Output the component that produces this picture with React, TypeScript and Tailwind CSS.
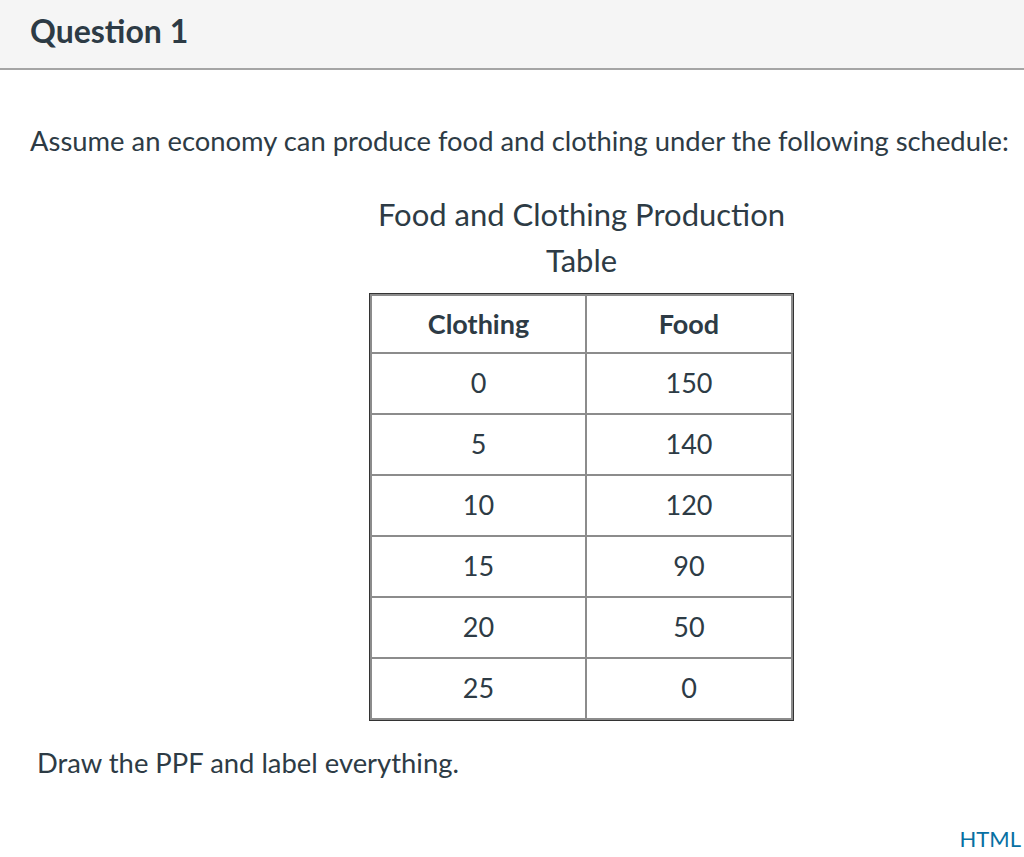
import React from "react";

const rows: [string, string][] = [
  ["0", "150"],
  ["5", "140"],
  ["10", "120"],
  ["15", "90"],
  ["20", "50"],
  ["25", "0"],
];

export default function App() {
  return (
    <div className="w-[1024px] h-[857px] bg-white text-[#2d3b45] flex flex-col" style={{ fontFamily: "Lato, 'Noto Sans', sans-serif" }}>
      <div className="h-[70px] bg-[#f5f5f5] border-b-2 border-[#a5a5a5] flex items-center pl-[30px] shrink-0">
        <h2 className="text-[32px] font-bold leading-none -mt-[6px]">Question 1</h2>
      </div>
      <div className="flex flex-col flex-1 px-[30px]">
        <p className="text-[27.4px] leading-[30px] mt-[56px] whitespace-nowrap">
          Assume an economy can produce food and clothing under the following schedule:
        </p>
        <div className="flex flex-col items-center mt-[35px] ml-[339px] w-[425px]">
          <div className="text-[31px] leading-[46px] text-center whitespace-nowrap">
            Food and Clothing Production<br />Table
          </div>
          <div className="border border-[#333] mt-[10px] w-[425px]">
            <table className="border-collapse w-full text-[27px]">
              <thead>
                <tr className="h-[58px]">
                  <th className="border-2 border-[#8c8c8c] font-bold w-[215px] text-center">Clothing</th>
                  <th className="border-2 border-[#8c8c8c] font-bold text-center">Food</th>
                </tr>
              </thead>
              <tbody>
                {rows.map(([c, f]) => (
                  <tr key={c} className="h-[61px]">
                    <td className="border-2 border-[#8c8c8c] text-center">{c}</td>
                    <td className="border-2 border-[#8c8c8c] text-center">{f}</td>
                  </tr>
                ))}
              </tbody>
            </table>
          </div>
        </div>
        <p className="text-[27.4px] leading-[30px] mt-[27px] ml-[7px]">Draw the PPF and label everything.</p>
        <div className="flex justify-end mt-[46px] -mr-[27px]">
          <span className="text-[22px] leading-[30px] text-[#0770a3]">HTML</span>
        </div>
      </div>
    </div>
  );
}
